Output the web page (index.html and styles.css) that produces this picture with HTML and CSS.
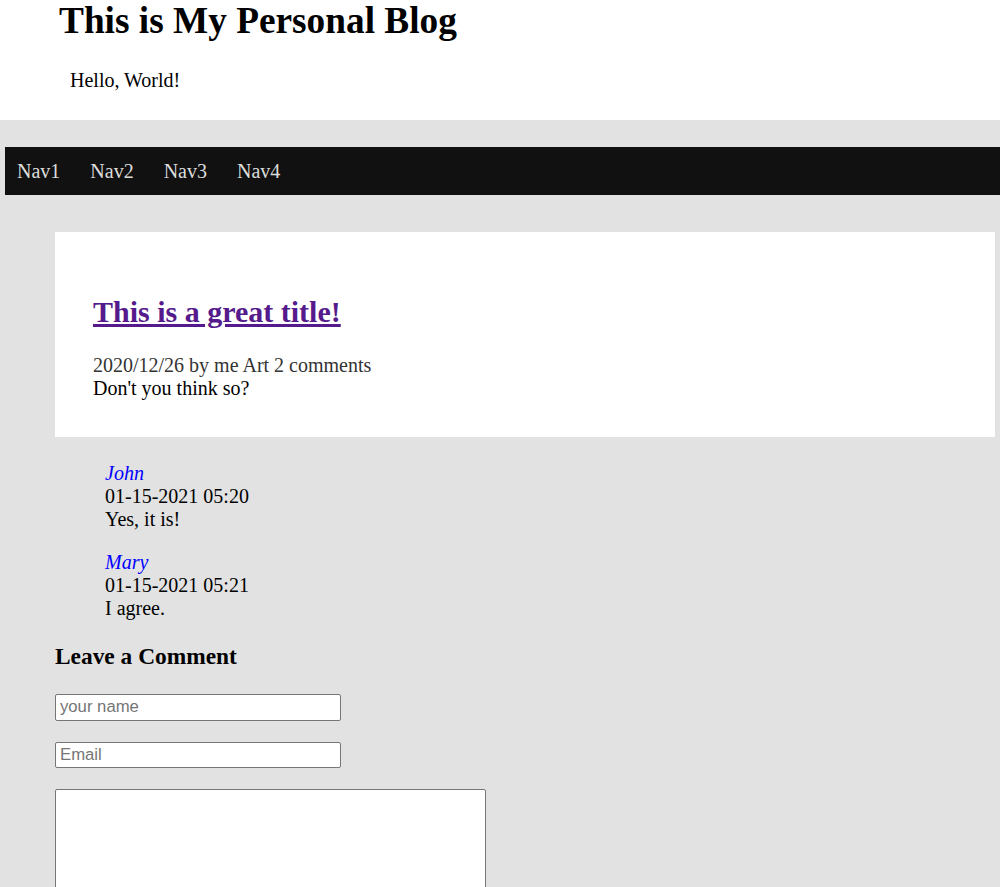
FILE: index.html
```html
<!DOCTYPE html>
<html>
<head>
<meta charset="utf-8">
<title>This is My Personal Blog</title>
<link rel="stylesheet" href="styles.css">
</head>
<body>
<header class="site-header">
  <h1 class="site-title">This is My Personal Blog</h1>
  <p class="site-tagline">Hello, World!</p>
</header>
<nav class="main-nav">
  <a class="nav-item" href="#">Nav1</a>
  <a class="nav-item" href="#">Nav2</a>
  <a class="nav-item" href="#">Nav3</a>
  <a class="nav-item" href="#">Nav4</a>
</nav>
<main class="content">
  <article class="post">
    <h2 class="post-title"><a href="#">This is a great title!</a></h2>
    <div class="post-meta">2020/12/26 by me Art 2 comments</div>
    <div class="post-body">Don't you think so?</div>
  </article>
  <section class="comments">
    <div class="comment">
      <div class="comment-author">John</div>
      <div class="comment-date">01-15-2021 05:20</div>
      <div class="comment-text">Yes, it is!</div>
    </div>
    <div class="comment">
      <div class="comment-author">Mary</div>
      <div class="comment-date">01-15-2021 05:21</div>
      <div class="comment-text">I agree.</div>
    </div>
  </section>
  <section class="comment-form">
    <h3 class="form-title">Leave a Comment</h3>
    <div class="field"><input class="text-input" type="text" placeholder="your name"></div>
    <div class="field"><input class="text-input" type="text" placeholder="Email"></div>
    <div class="field"><textarea class="text-area"></textarea></div>
  </section>
</main>
</body>
</html>
```
FILE: styles.css
```css
html, body {
  margin: 0;
  padding: 0;
}
body {
  background: #e2e2e2;
  font-family: "Liberation Serif", "Times New Roman", serif;
  font-size: 20px;
  color: #000;
}
.site-header {
  background: #fff;
  height: 120px;
  padding: 0 0 0 59px;
  box-sizing: border-box;
}
.site-title {
  font-size: 37.3px;
  margin: 0;
  line-height: 42px;
}
.site-tagline {
  margin: 27px 0 0 11px;
  line-height: 23px;
}
.main-nav {
  display: flex;
  background: #111;
  margin: 27px 0 0 5px;
  height: 48px;
  align-items: center;
}
.nav-item {
  color: #ddd;
  text-decoration: none;
  padding: 0 18px 0 12px;
  line-height: 23px;
}
.content {
  padding: 37px 5px 0 55px;
}
.post {
  background: #fff;
  padding: 38px 38px 37px 38px;
}
.post-title {
  font-size: 30px;
  margin: 25px 0 25px 0;
}
.post-title a {
  color: #551a8b;
}
.post-meta {
  color: #333;
  line-height: 23px;
}
.post-body {
  line-height: 23px;
}
.comments {
  padding: 25px 0 0 50px;
}
.comment {
  line-height: 23px;
  margin-bottom: 20px;
}
.comment:last-child {
  margin-bottom: 0;
}
.comment-author {
  color: #0000ff;
  font-style: italic;
}
.form-title {
  font-size: 23.4px;
  margin: 23px 0 24px 0;
}
.field {
  margin-bottom: 21px;
}
.text-input {
  width: 286px;
  height: 26.5px;
  box-sizing: border-box;
  border: 1px solid #767676;
  border-radius: 2px;
  font-family: "Liberation Sans", Arial, sans-serif;
  font-size: 16.7px;
  padding: 0 4px;
  background: #fff;
  display: block;
}
.text-input::placeholder {
  color: #757575;
}
.text-area {
  width: 431px;
  height: 150px;
  box-sizing: border-box;
  border: 1px solid #767676;
  border-radius: 2px;
  background: #fff;
  display: block;
}
```
